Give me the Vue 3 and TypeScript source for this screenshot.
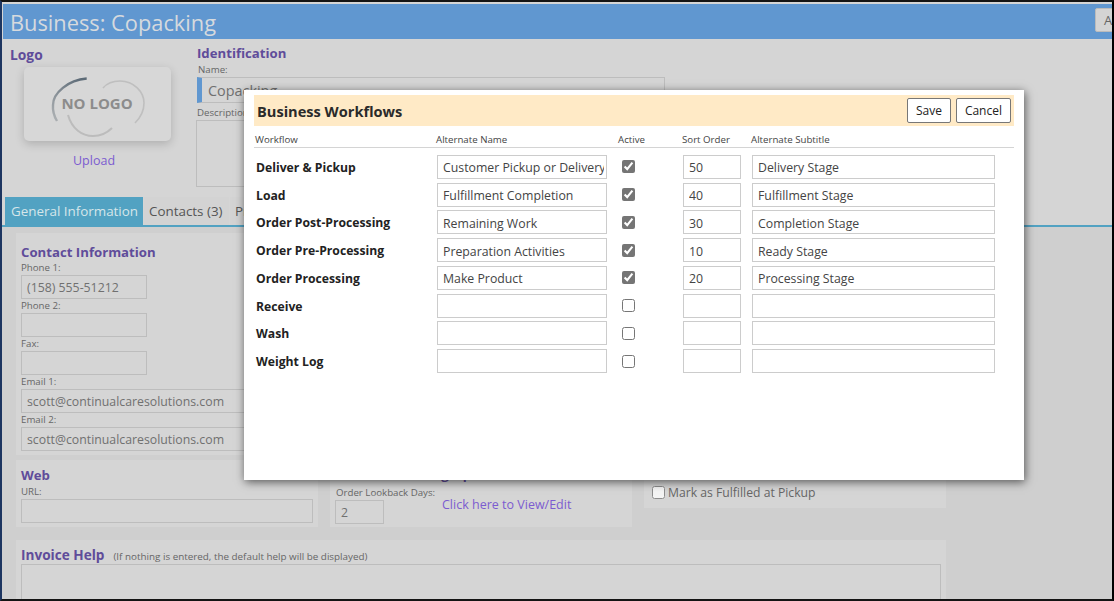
<script setup lang="ts">
interface Row { name: string; alt: string; active: boolean; sort: string; sub: string }
const rows: Row[] = [
  { name: 'Deliver & Pickup', alt: 'Customer Pickup or Delivery', active: true, sort: '50', sub: 'Delivery Stage' },
  { name: 'Load', alt: 'Fulfillment Completion', active: true, sort: '40', sub: 'Fulfillment Stage' },
  { name: 'Order Post-Processing', alt: 'Remaining Work', active: true, sort: '30', sub: 'Completion Stage' },
  { name: 'Order Pre-Processing', alt: 'Preparation Activities', active: true, sort: '10', sub: 'Ready Stage' },
  { name: 'Order Processing', alt: 'Make Product', active: true, sort: '20', sub: 'Processing Stage' },
  { name: 'Receive', alt: '', active: false, sort: '', sub: '' },
  { name: 'Wash', alt: '', active: false, sort: '', sub: '' },
  { name: 'Weight Log', alt: '', active: false, sort: '', sub: '' },
]
const contacts = [
  { label: 'Phone 1:', value: '(158) 555-51212', short: true },
  { label: 'Phone 2:', value: '', short: true },
  { label: 'Fax:', value: '', short: true },
  { label: 'Email 1:', value: 'scott@continualcaresolutions.com', short: false },
  { label: 'Email 2:', value: 'scott@continualcaresolutions.com', short: false },
]
</script>

<template>
  <div class="frame">
    <header class="topbar">
      <h1>Business: Copacking</h1>
      <button class="topbtn">Add</button>
    </header>

    <section class="ident">
      <div class="logo-col">
        <h2>Logo</h2>
        <div class="logo-card">
          <svg width="147" height="74" viewBox="0 0 147 74" fill="none">
            <defs>
              <linearGradient id="arc" x1="0.8" y1="0" x2="0.2" y2="1">
                <stop offset="0" stop-color="#5d6b77" />
                <stop offset="1" stop-color="#a9adb0" />
              </linearGradient>
            </defs>
            <path d="M62.7 11.5 C44 13 29 26 29 38 C28.5 44 30 49 33 54" stroke="url(#arc)" stroke-width="2.4" />
            <path d="M79 21 C84 15 91 14 96 14 C110 14 120 25 120 36 C120 44 116 51 111 56" stroke="#bfbfbf" stroke-width="1.6" />
            <path d="M44 48 C48 62 58 69 69 69 C76 69 83 66 88 61" stroke="#bcbcbc" stroke-width="2" />
            <text x="73" y="42" text-anchor="middle" class="nologo">NO LOGO</text>
          </svg>
        </div>
        <a class="link upload">Upload</a>
      </div>
      <div class="id-col">
        <h2>Identification</h2>
        <label class="lbl name-lbl">Name:</label>
        <input class="field name-input" value="Copacking" readonly />
        <label class="lbl">Description:</label>
        <textarea class="field desc" readonly></textarea>
      </div>
    </section>

    <nav class="tabs">
      <span class="tab on">General Information</span>
      <span class="tab">Contacts (3)</span>
      <span class="tab">Products</span>
    </nav>

    <main class="body">
      <div class="stack">
        <section class="panel contact">
          <h2>Contact Information</h2>
          <div v-for="c in contacts" :key="c.label">
            <label class="lbl">{{ c.label }}</label>
            <input class="field" :class="{ short: c.short }" :value="c.value" readonly />
          </div>
        </section>
        <section class="panel web">
          <h2>Web</h2>
          <label class="lbl">URL:</label>
          <input class="field" readonly />
        </section>
      </div>
      <section class="panel mid">
        <h2>Order Scheduling Options</h2>
        <div class="mid-row">
          <div class="days-col">
            <label class="lbl">Order Lookback Days:</label>
            <input class="field days" value="2" readonly />
          </div>
          <a class="link view">Click here to View/Edit</a>
        </div>
      </section>
      <section class="panel right">
        <label class="chk"><input type="checkbox" />Fulfill at Pickup</label>
        <label class="chk"><input type="checkbox" />Mark as Fulfilled at Pickup</label>
      </section>
      <section class="panel invoice">
        <h2>Invoice Help <small>(If nothing is entered, the default help will be displayed)</small></h2>
        <textarea class="field inv" readonly></textarea>
      </section>
    </main>

    <div class="modal">
      <div class="m-title">
        <h3>Business Workflows</h3>
        <button class="btn">Save</button>
        <button class="btn">Cancel</button>
      </div>
      <div class="grid head">
        <span class="first">Workflow</span><span>Alternate Name</span><span>Active</span><span>Sort Order</span><span>Alternate Subtitle</span>
      </div>
      <div class="rows">
        <div v-for="r in rows" :key="r.name" class="grid row">
          <b>{{ r.name }}</b>
          <input class="m-in" :value="r.alt" readonly />
          <input class="m-chk" type="checkbox" :checked="r.active" />
          <input class="m-in" :value="r.sort" readonly />
          <input class="m-in sub" :value="r.sub" readonly />
        </div>
      </div>
    </div>
  </div>
</template>

<style>
html, body { margin: 0; background: #000; overflow: hidden; }
</style>

<style scoped>
* { box-sizing: border-box; }
.frame {
  position: relative;
  width: 1114px;
  height: 601px;
  overflow: hidden;
  border-top: 2px solid #141414;
  border-bottom: 2px solid #141414;
  border-left: 2px solid #1d3560;
  border-right: 2px solid #000;
  padding-top: 2px;
  background: #d5d5d5;
  font-family: "Open Sans", "Noto Sans", sans-serif;
  color: #555;
}
h1, h2, h3 { margin: 0; }
.topbar {
  height: 35px;
  margin-left: 1px;
  padding: 2px 0 0 7px;
  background: #6097d0;
  display: flex;
  align-items: center;
  justify-content: space-between;
  overflow: hidden;
}
h1 { font-size: 21.8px; font-weight: 400; color: #d6dade; white-space: nowrap; }
.topbtn {
  width: 40px; height: 24px; margin-right: -23px; margin-top: -5px; padding: 0 0 0 8px; text-align: left;
  background: #d4d4d4; border: 1px solid #bbb; border-radius: 2px;
  font: 13px "Open Sans", sans-serif; color: #666;
}
h2 { font-size: 13.2px; font-weight: 700; color: #5f4c9a; line-height: 16px; white-space: nowrap; }
.ident { display: flex; height: 158px; }
.logo-col { width: 195px; padding: 8px 0 0 8px; }
.logo-col h2 { font-size: 13.8px; }
.logo-card {
  width: 147px; height: 74px; margin: 4px 0 0 14px;
  background: #d7d7d7; border-radius: 5px;
  box-shadow: 0 3px 10px rgba(0,0,0,.18);
}
.nologo { font: 700 15px "Open Sans", sans-serif; fill: #8c8c8c; }
.link { color: #7c5cd0; font-size: 12.5px; white-space: nowrap; }
.upload { display: block; margin: 11px 0 0 63px; }
.id-col { padding-top: 6px; width: 468px; }
.lbl { display: block; font-size: 9.7px; line-height: 14px; height: 14px; color: #666; white-space: nowrap; }
.name-lbl { margin: 2px 0 0 1px; }
.field {
  display: block; width: 100%; height: 24px; padding: 0 5px; margin: 0;
  background: transparent; border: 1px solid #bdbdbd; border-radius: 0; outline: none;
  font: 12.3px "Open Sans", sans-serif; color: #707070; resize: none;
}
.name-input { height: 26px; border-left: 5px solid #6097d0; font-size: 14.4px; padding-left: 6px; margin-bottom: 3px; }
.desc { height: 67px; margin-left: -1px; }
.tabs { display: flex; gap: 1px; height: 30px; padding-left: 3px; border-bottom: 2px solid #52a2c2; }
.tab { height: 28px; padding: 0 5px; line-height: 28px; font-size: 13.4px; background: #d3d3d3; white-space: nowrap; }
.tab.on { width: 138px; padding: 0 0 0 6px; background: #52a2c2; color: #d6e6ea; }
.tab:nth-child(2) { width: 85px; }
.body {
  display: grid;
  grid-template-columns: 302px 302px 302px;
  column-gap: 12px;
  row-gap: 13px;
  height: 374px;
  padding: 6px 0 0 14px;
  background: #cfcfcf;
  align-content: start;
}
.panel { background: #d5d5d5; padding: 0 5px; }
.stack { display: flex; flex-direction: column; gap: 5px; }
.contact { height: 222px; padding-top: 11px; }
.contact h2 { margin-bottom: 1px; }
.short { width: 126px; }
.web { height: 67px; padding-top: 7px; }
.web h2 { margin-bottom: 2px; }
.mid { align-self: end; height: 80px; padding: 19px 5px 0; }
.mid-row { display: flex; margin-top: 4px; }
.days-col { width: 102px; }
.days-col .lbl { margin-left: 1px; }
.days { width: 49px; }
.view { margin: 10px 0 0 5px; }
.right { align-self: end; margin-bottom: 19px; height: 60px; padding: 13px 8px 0; }
.chk { display: flex; align-items: center; height: 18px; margin-bottom: 4px; font-size: 12.2px; color: #666; white-space: nowrap; }
.chk input { width: 13px; height: 13px; margin: 0 3px 0 0; opacity: .75; }
.invoice { grid-column: 1 / 4; height: 70px; padding-top: 7px; }
.invoice h2 { display: flex; align-items: baseline; gap: 9px; height: 17px; font-size: 13.6px; }
.invoice small { font-size: 9.85px; font-weight: 400; color: #666; }
.inv { height: 60px; }

.modal {
  position: absolute;
  left: 242px; top: 88px;
  width: 780px; height: 390px;
  padding: 5px 10px;
  background: #fff;
  box-shadow: 1px 2px 9px rgba(0,0,0,.6);
  color: #222;
}
.m-title {
  display: flex; align-items: center; gap: 5px;
  height: 31px; padding: 0 3px;
  background: #ffeac6;
}
h3 { flex: 1; font-size: 14.6px; font-weight: 700; color: #2a2a2a; white-space: nowrap; }
.btn {
  height: 25px; padding: 0 8px; background: #fff;
  border: 1px solid #777; border-radius: 2px;
  font: 12px "Open Sans", sans-serif; color: #222;
}
.grid { display: grid; grid-template-columns: 182px 182px 64px 69px 263px; align-items: center; }
.head {
  height: 22px; padding-top: 5px; border-bottom: 1px solid #d4d4d4;
  font-size: 9.7px; color: #444; margin-bottom: 5px;
}
.first { padding-left: 1px; }
.row { height: 27.75px; }
.row b { padding-left: 2px; font-size: 12.2px; font-weight: 700; color: #222; white-space: nowrap; margin-top: 1px; }
.m-in {
  width: 170px; height: 24px; margin-left: 1px; padding: 2px 2px 0 5px;
  border: 1px solid #ccc; border-radius: 0; outline: none; background: #fff;
  font: 12.3px "Open Sans", sans-serif; color: #444;
}
.row .m-in:nth-child(4) { width: 58px; }
.m-in.sub { width: 243px; }
.m-chk { width: 13px; height: 13px; margin: 0 0 0 4px; accent-color: #757575; }
</style>
